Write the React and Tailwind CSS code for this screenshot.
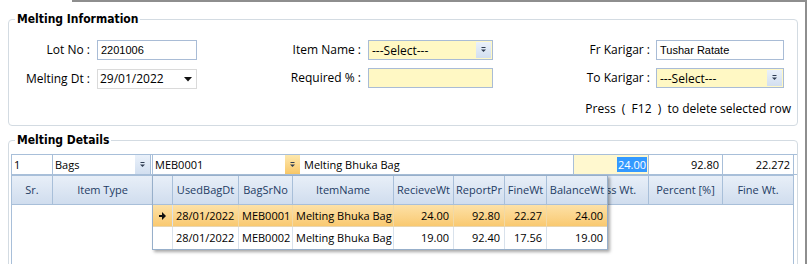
import React from 'react'

const TAHOMA = "font-['DejaVu_Sans_Condensed','DejaVu_Sans',sans-serif] font-stretch-condensed"
const ARIAL = "font-['Liberation_Sans',Arial,sans-serif]"

function Arrow({ color = '#2f3d52' }) {
  return (
    <svg width="7" height="6" viewBox="0 0 7 6">
      <path d="M1.5 0h4v1h-4z" fill={color} />
      <path d="M1 2.5h5L3.5 5z" fill={color} />
    </svg>
  )
}

function DropBtn({ orange }) {
  return (
    <div
      className={`w-[15px] h-full flex items-center justify-center shrink-0 ${
        orange
          ? 'bg-linear-to-b from-[#fde8ad] to-[#f8c766]'
          : 'bg-linear-to-b from-[#eaf1fa] to-[#d2dff0]'
      }`}
    >
      <Arrow />
    </div>
  )
}

function Label({ w, children }) {
  return <span className={`${w} text-right whitespace-nowrap leading-[16px]`}>{children}</span>
}

const popupCols = [
  { label: '', w: 'w-[20px]' },
  { label: 'UsedBagDt', w: 'w-[66px]' },
  { label: 'BagSrNo', w: 'w-[54px]' },
  { label: 'ItemName', w: 'w-[101px]' },
  { label: 'RecieveWt', w: 'w-[60px]', num: true },
  { label: 'ReportPr', w: 'w-[51px]', num: true },
  { label: 'FineWt', w: 'w-[42px]', num: true },
  { label: 'BalanceWt', w: 'w-[60px]', num: true },
]

const bags = [
  ['28/01/2022', 'MEB0001', 'Melting Bhuka Bag', '24.00', '92.80', '22.27', '24.00'],
  ['28/01/2022', 'MEB0002', 'Melting Bhuka Bag', '19.00', '92.40', '17.56', '19.00'],
]

// columns under the popup keep no caption, only the Gross Wt. tail shows
const gridCols = [
  { label: 'Sr.', w: 'w-[42px] border-l' },
  { label: 'Item Type', w: 'w-[100px]' },
  { label: '', w: 'w-[148px]' },
  { label: '', w: 'w-[274px]' },
  { label: 'Gross Wt.', w: 'w-[74px]' },
  { label: 'Percent [%]', w: 'w-[74px]' },
  { label: 'Fine Wt.', w: 'w-[71px]' },
]

export default function App() {
  return (
    <div className="relative w-[807px] h-[264px] overflow-hidden bg-white border-r-2 border-[#8e8e8e] font-['Open_Sans',sans-serif] text-[12px] text-black">
      <div className="ml-[72px] h-[2px] bg-[#8e8e8e]" />

      {/* Melting Information */}
      <fieldset className="ml-[8px] mt-[9px] w-[790px] border border-[#d3dbe2] rounded-[4px] pt-[13px] pb-[8px]">
        <legend className={`ml-[6px] px-[2px] font-bold text-[12px] leading-[16px] ${TAHOMA}`}>
          Melting Information
        </legend>

        <div className="flex pl-[7px]">
          <div className="flex flex-col gap-[9px] w-[181px]">
            <div className="flex items-center h-[20px]">
              <Label w="w-[74px]">Lot No :</Label>
              <div className={`ml-[7px] w-[100px] h-[20px] border border-[#a9bcd6] px-[3px] text-[11px] leading-[18px] ${ARIAL}`}>
                2201006
              </div>
            </div>
            <div className="flex items-center h-[20px]">
              <Label w="w-[74px]">Melting Dt :</Label>
              <div className="ml-[7px] w-[100px] h-[20px] border border-[#dadada] pl-[2px] pr-[4px] flex items-center justify-between">
                <span className="leading-[16px]">29/01/2022</span>
                <svg width="8" height="5" viewBox="0 0 8 5"><path d="M0 0h8L4 4.5z" fill="#111" /></svg>
              </div>
            </div>
          </div>

          <div className="ml-[73px] flex flex-col gap-[8px] w-[223px]">
            <div className="flex items-center h-[20px]">
              <Label w="w-[91px]">Item Name :</Label>
              <div className="ml-[7px] w-[125px] h-[20px] border border-[#a9bcd6] bg-[#fff8c4] flex items-stretch p-px">
                <span className="flex-1 pl-[2px] leading-[17px]">---Select---</span>
                <DropBtn />
              </div>
            </div>
            <div className="flex items-center h-[20px]">
              <Label w="w-[91px]">Required % :</Label>
              <div className="ml-[7px] w-[125px] h-[20px] border border-[#a9bcd6] bg-[#fff8c4]" />
            </div>
          </div>

          <div className="ml-[77px] flex flex-col gap-[8px] w-[214px]">
            <div className="flex items-center h-[20px]">
              <Label w="w-[80px]">Fr Karigar :</Label>
              <div className={`ml-[6px] w-[128px] h-[20px] border border-[#a9bcd6] px-[3px] text-[11px] leading-[18px] ${ARIAL}`}>
                Tushar Ratate
              </div>
            </div>
            <div className="flex items-center h-[20px]">
              <Label w="w-[80px]">To Karigar :</Label>
              <div className="ml-[6px] w-[128px] h-[20px] border border-[#a9bcd6] bg-[#fff8c4] flex items-stretch p-px">
                <span className="flex-1 pl-[2px] leading-[17px]">---Select---</span>
                <DropBtn />
              </div>
            </div>
          </div>
        </div>

        <div className="mt-[12px] flex justify-end pr-[6px] leading-[16px] whitespace-pre">
          Press  (  F12  )  to delete selected row
        </div>
      </fieldset>

      {/* Melting Details */}
      <fieldset className="ml-[8px] mt-[6px] w-[790px] h-[200px] border border-[#d3dbe2] rounded-[4px] pt-[6px]">
        <legend className={`ml-[6px] px-[2px] font-bold text-[12px] leading-[16px] ${TAHOMA}`}>
          Melting Details
        </legend>

        <div className="ml-[2px] flex h-[21px] text-[11px] border-y border-[#a8bfd9]">
          <div className="w-[42px] border-x border-[#a8bfd9] pl-[2px] leading-[19px]">1</div>
          <div className="w-[98px] border-r border-[#a8bfd9] flex items-stretch">
            <span className="flex-1 pl-[2px] leading-[19px]">Bags</span>
            <DropBtn />
          </div>
          <div className="w-[1px]" />
          <div className="w-[148px] border-l border-[#a8bfd9] flex items-stretch">
            <span className="flex-1 pl-[2px] leading-[19px]">MEB0001</span>
            <DropBtn orange />
          </div>
          <div className="w-[274px] border-r border-[#a8bfd9] pl-[4px] leading-[19px]">Melting Bhuka Bag</div>
          <div className="w-[75px] border-r border-[#a8bfd9] bg-[#fff8cf] flex items-center justify-end pr-[1px]">
            <span className="bg-[#3399ff] text-white leading-[15px] px-px">24.00</span>
          </div>
          <div className="w-[74px] border-r border-[#a8bfd9] text-right pr-[3px] leading-[19px]">92.80</div>
          <div className="w-[71px] border-r border-[#a8bfd9] text-right pr-[3px] leading-[19px]">22.272</div>
        </div>

        <div className="ml-[2px] w-[783px] h-[120px] border-x border-[#a8bfd9]">
          <div className="flex h-[30px] -mx-px text-[11px] text-[#1e3c64]">
            {gridCols.map((c, i) => (
              <div
                key={i}
                className={`${c.w} border-y border-r border-[#a8bfd9] bg-linear-to-b from-[#e8eff8] to-[#d0ddee] flex items-center justify-center`}
              >
                {c.label}
              </div>
            ))}
          </div>
        </div>
      </fieldset>

      {/* bag lookup popup */}
      <div className="absolute left-[152px] top-[175px] w-[456px] border border-[#97afca] bg-white shadow-[2px_2px_3px_rgba(0,0,0,0.35)] text-[11px]">
        <div className="flex h-[29px] border-b border-[#a8bfd9] text-[#1e3c64]">
          {popupCols.map((c, i) => (
            <div
              key={i}
              className={`${c.w} ${i < popupCols.length - 1 ? 'border-r' : ''} border-[#a8bfd9] bg-linear-to-b from-[#e8eff8] to-[#d0ddee] flex items-center justify-center whitespace-nowrap overflow-hidden`}
            >
              {c.label}
            </div>
          ))}
        </div>
        {bags.map((row, r) => (
          <div
            key={r}
            className={`flex h-[22px] ${r === 0 ? 'bg-linear-to-b from-[#fde1a6] to-[#f9c970] border-b border-[#e9d6b0]' : ''}`}
          >
            <div className="w-[20px] border-r border-[#d9e2ec] flex items-center justify-center">
              {r === 0 && (
                <svg width="7" height="8" viewBox="0 0 7 8"><path d="M0 3h3V0l4 4-4 4V5H0z" fill="#111" /></svg>
              )}
            </div>
            {row.map((v, i) => {
              const c = popupCols[i + 1]
              return (
                <div
                  key={i}
                  className={`${c.w} ${i < row.length - 1 ? 'border-r' : ''} ${r === 0 ? 'border-[#f1d9a6]' : 'border-[#d9e2ec]'} leading-[21px] whitespace-nowrap ${c.num ? 'text-right pr-[4px]' : 'pl-[3px]'}`}
                >
                  {v}
                </div>
              )
            })}
          </div>
        ))}
      </div>
    </div>
  )
}
